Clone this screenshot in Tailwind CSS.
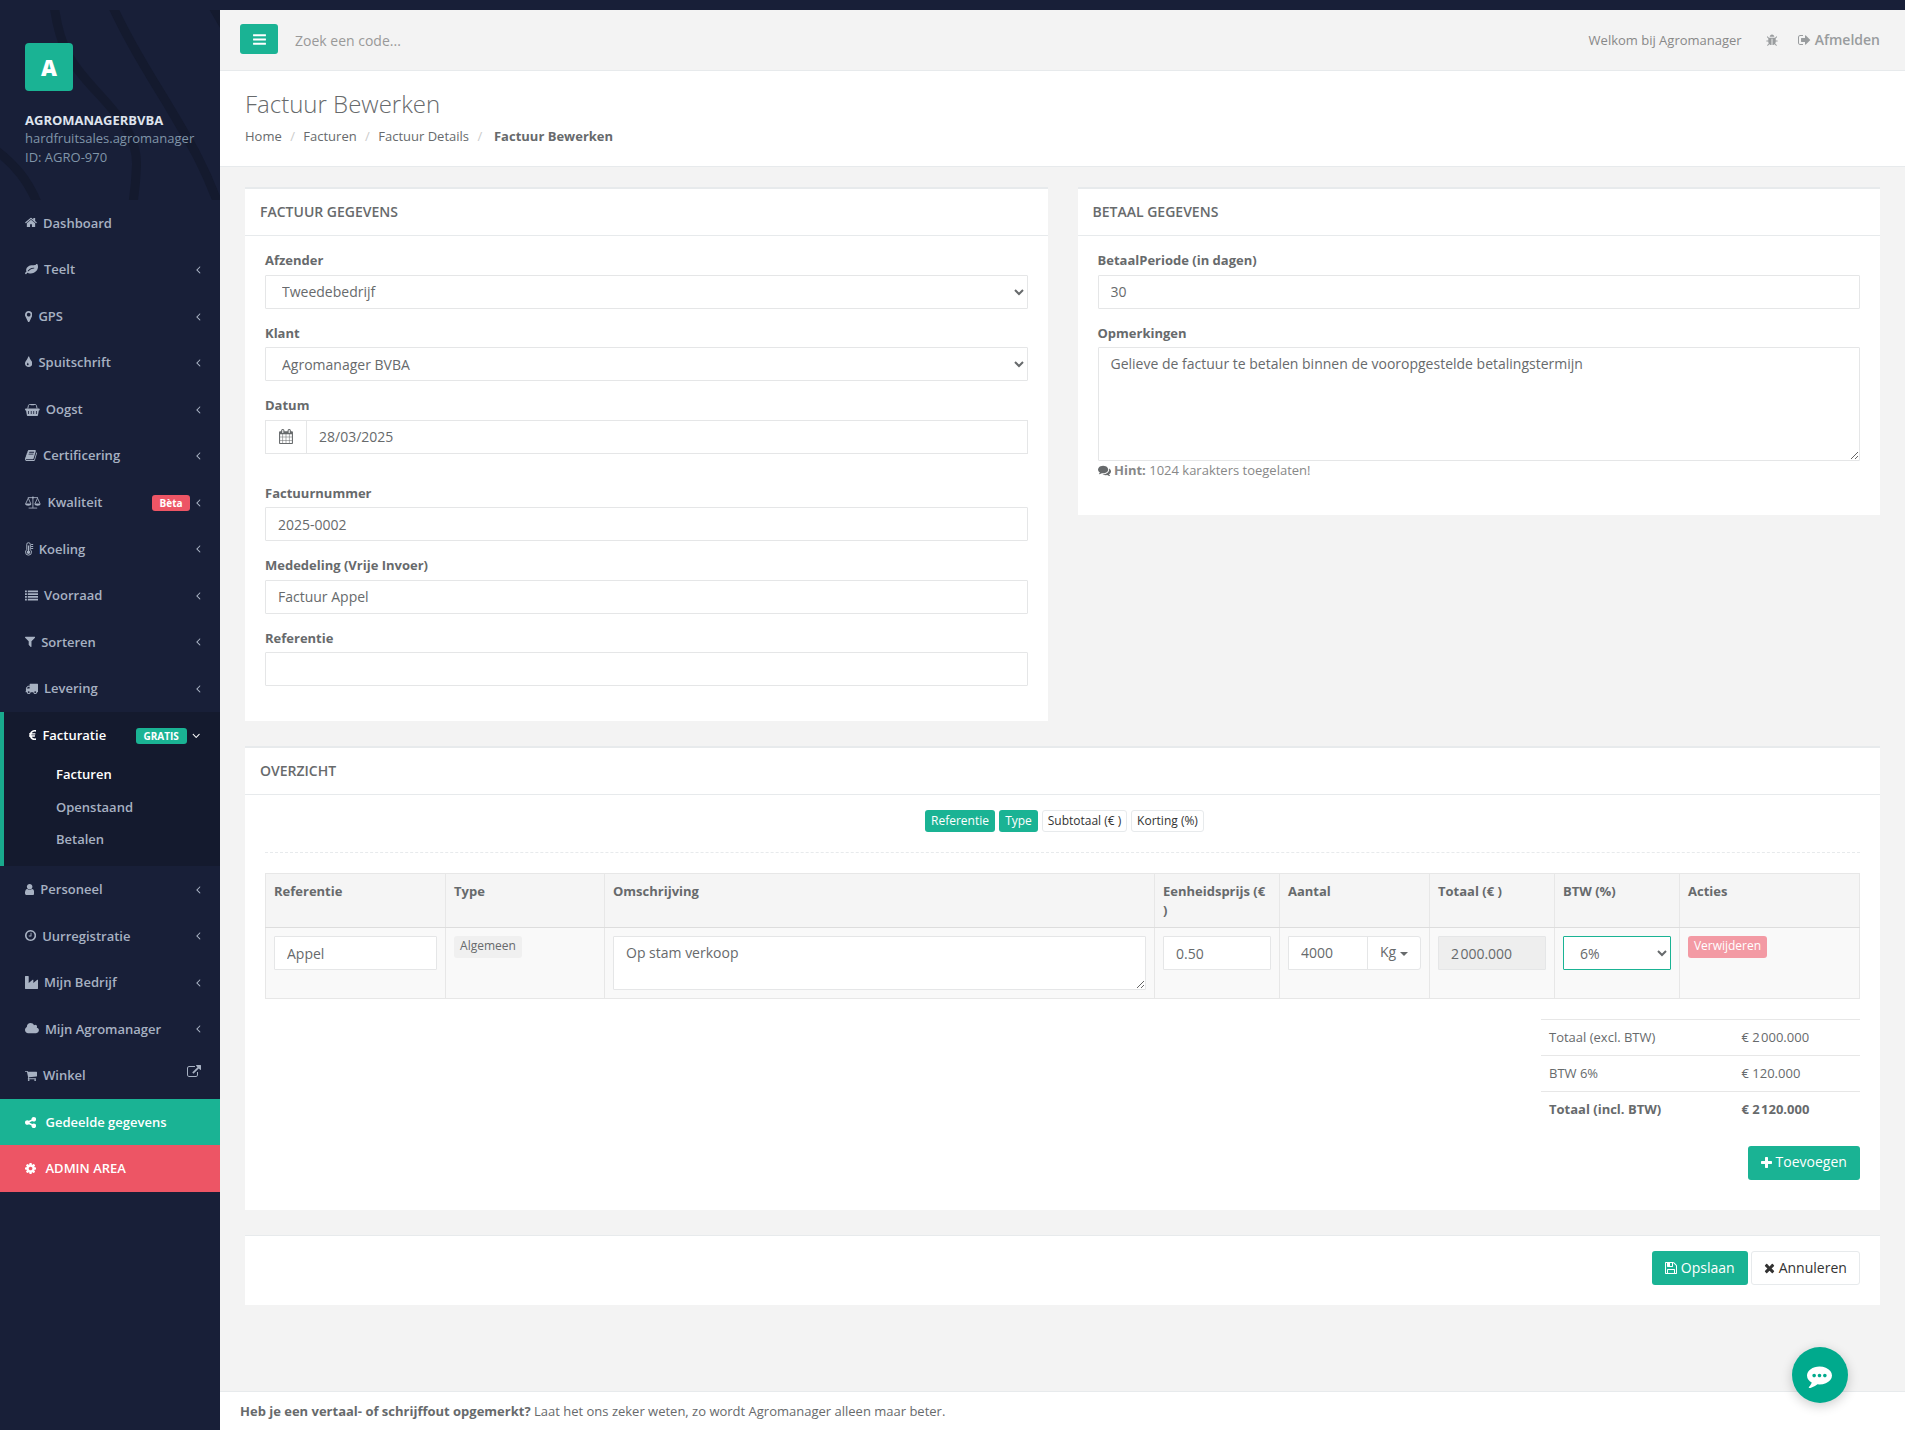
<!doctype html>
<html lang="nl">
<head>
    <meta charset="utf-8"/>
    <title>Factuur Bewerken</title>
    <script src="https://cdn.jsdelivr.net/npm/@tailwindcss/browser@4"></script>
</head>
<body class="bg-[#181f38] font-['Open_Sans',sans-serif] text-[13px] leading-[18.57px] text-[#676a6c] pt-[10px] h-[1430px] overflow-hidden">
<!-- icon sprite -->
<svg class="hidden">
    <symbol id="bars" viewBox="128 0 1536 1792"><path d="M1664 1344v128q0 26-19 45t-45 19h-1408q-26 0-45-19t-19-45v-128q0-26 19-45t45-19h1408q26 0 45 19t19 45zm0-512v128q0 26-19 45t-45 19h-1408q-26 0-45-19t-19-45v-128q0-26 19-45t45-19h1408q26 0 45 19t19 45zm0-512v128q0 26-19 45t-45 19h-1408q-26 0-45-19t-19-45v-128q0-26 19-45t45-19h1408q26 0 45 19t19 45z"/></symbol>
    <symbol id="home" viewBox="64 0 1664 1792"><path d="M1472 992v480q0 26-19 45t-45 19h-384v-384h-256v384h-384q-26 0-45-19t-19-45v-480q0-1 .5-3t.5-3l575-474 575 474q1 2 1 6zm223-69l-62 74q-8 9-21 11h-3q-13 0-21-7l-692-577-692 577q-12 8-24 7-13-2-21-11l-62-74q-8-10-7-23.5t11-21.5l719-599q32-26 76-26t76 26l244 204v-195q0-14 9-23t23-9h192q14 0 23 9t9 23v408l219 182q10 8 11 21.5t-7 23.5z"/></symbol>
    <symbol id="leaf" viewBox="0 0 1792 1792"><path d="M1280 704q0-26-19-45t-45-19q-172 0-318 49.5t-259.5 134-235.5 219.5q-19 21-19 45 0 26 19 45t45 19q24 0 45-19 27-24 74-71t67-66q137-124 268.5-176t313.5-52q26 0 45-19t19-45zm512-198q0 95-20 193-46 224-184.5 383t-357.5 268q-214 108-438 108-148 0-286-47-15-5-88-42t-96-37q-16 0-39.5 32t-45 70-52.5 70-60 32q-43 0-63.5-17.5t-45.5-59.5q-2-4-6-11t-5.5-10-3-9.5-1.5-13.5q0-35 31-73.5t68-65.5 68-56 31-48q0-4-14-38t-16-44q-9-51-9-104 0-115 43.5-220t119-184.5 170.5-139 204-95.5q55-18 145-25.5t179.5-9 178.5-6 163.5-24 113.5-56.5l29.5-29.5 29.5-28 27-20 36.5-16 43.5-4.5q39 0 70.5 46t47.5 112 24 124 8 96z"/></symbol>
    <symbol id="marker" viewBox="384 0 1024 1792"><path d="M1152 640q0-106-75-181t-181-75-181 75-75 181 75 181 181 75 181-75 75-181zm256 0q0 109-33 179l-364 774q-16 33-47.5 52t-67.5 19-67.5-19-46.5-52l-365-774q-33-70-33-179 0-212 150-362t362-150 362 150 150 362z"/></symbol>
    <symbol id="tint" viewBox="384 0 1024 1792"><path d="M896 1152q0-36-20-69-1-1-15.5-22.5t-25.5-38-25-44-21-50.5q-4-16-21-16t-21 16q-7 23-21 50.5t-25 44-25.5 38-15.5 22.5q-20 33-20 69 0 53 37.5 90.5t90.5 37.5 90.5-37.5 37.5-90.5zm512-128q0 212-150 362t-362 150-362-150-150-362q0-145 81-275 6-9 62.5-90.5t101-151 99.5-178 83-201.5q9-30 34-47t51-17 51.5 17 33.5 47q28 93 83 201.5t99.5 178 101 151 62.5 90.5q81 127 81 275z"/></symbol>
    <symbol id="basket" viewBox="0 0 2048 1792"><path fill-rule="evenodd" d="M128 768h1792q53 0 90 37t38 91-38 90-90 38h-15l-115 662q-8 46-44 76t-82 30h-1280q-46 0-82-30t-44-76l-115-662h-15q-53 0-90-38t-38-90 38-91 90-37zM440 1100v420h110v-420zm360 0v420h110v-420zm350 0v420h110v-420zm360 0v420h110v-420z"/><path fill="none" stroke="currentColor" stroke-width="130" d="M380 768l100-440q25-120 150-120h180M1668 768l-100-440q-25-120-150-120h-180"/><rect x="760" y="128" width="528" height="190" rx="60"/></symbol>
    <symbol id="book" viewBox="64 0 1664 1792"><path d="M1703 478q40 57 18 129l-275 906q-19 64-76.5 107.5t-122.5 43.5h-923q-77 0-148.5-53.5t-99.5-131.5q-24-67-2-127 0-4 3-27t4-37q1-8-3-21.5t-3-19.5q2-11 8-21t16.5-23.5 16.5-23.5q23-38 45-91.5t30-91.5q3-10 .5-30t-.5-28q3-11 17-28t17-23q21-36 42-92t25-90q1-9-2.5-32t.5-28q4-13 22-30.5t22-22.5q19-26 42.5-84.5t27.5-96.5q1-8-3-25.5t-2-26.5q2-8 9-18t18-23 17-21q8-12 16.5-30.5t15-35 16-36 19.5-32 26.5-23.5 36-11.5 47.5 5.5l-1 3q38-9 51-9h761q74 0 114 56t18 130l-274 906q-36 119-71.5 153.5t-128.5 34.5h-869q-27 0-38 15-11 16-1 43 24 70 144 70h923q29 0 56-15.5t35-41.5l300-987q7-22 5-57 38 15 59 43zm-1064 2q-4 13 2 22.5t20 9.5h608q13 0 25.5-9.5t16.5-22.5l21-64q4-13-2-22.5t-20-9.5h-608q-13 0-25.5 9.5t-16.5 22.5zm-83 256q-4 13 2 22.5t20 9.5h608q13 0 25.5-9.5t16.5-22.5l21-64q4-13-2-22.5t-20-9.5h-608q-13 0-25.5 9.5t-16.5 22.5z"/></symbol>
    <symbol id="scale" viewBox="0 0 2176 1792"><path fill="none" stroke="currentColor" stroke-width="120" d="M384 220h1408M1088 200v1450M500 1664h1176M448 300l-370 800h740zM1728 300l-370 800h740z"/><path d="M20 1100h856q-20 230-428 230t-428-230zm1280 0h856q-20 230-428 230t-428-230z"/><circle cx="1088" cy="210" r="130"/></symbol>
    <symbol id="thermo" viewBox="0 0 1088 1792"><path fill="none" stroke="currentColor" stroke-width="125" d="M224 1000V290q0-200 225-200t225 200v710q160 110 160 310 0 370-385 370t-385-370q0-200 160-310z"/><circle cx="449" cy="1310" r="210"/><path d="M370 440h158v800h-158zM780 256h284v128h-284zm0 256h284v128h-284zm0 256h284v128h-284z"/></symbol>
    <symbol id="list" viewBox="0 0 1792 1792"><path d="M0 256h256v256h-256zm0 384h256v256h-256zm0 384h256v256h-256zm0 384h256v256h-256zM384 256h1408v256h-1408zm0 384h1408v256h-1408zm0 384h1408v256h-1408zm0 384h1408v256h-1408z" transform="translate(0 -64)"/></symbol>
    <symbol id="filter" viewBox="192 0 1408 1792"><path d="M1595 295q17 41-14 70l-493 493v742q0 42-39 59-13 5-25 5-27 0-45-19l-256-256q-19-19-19-45v-486l-493-493q-31-29-14-70 17-39 59-39h1280q42 0 59 39z"/></symbol>
    <symbol id="truck" viewBox="0 0 1792 1792"><path d="M640 1408q0-52-38-90t-90-38-90 38-38 90 38 90 90 38 90-38 38-90zm-384-512h384v-256h-158q-13 0-22 9l-195 195q-9 9-9 22v30zm1280 512q0-52-38-90t-90-38-90 38-38 90 38 90 90 38 90-38 38-90zm256-1088v1024q0 15-4 26.5t-13.5 18.5-16.5 11.5-23.5 6-22.5 2-25.5 0-22.5-.5q0 106-75 181t-181 75-181-75-75-181h-384q0 106-75 181t-181 75-181-75-75-181h-64q-3 0-22.5.5t-25.5 0-22.5-2-23.5-6-16.5-11.5-13.5-18.5-4-26.5q0-26 19-45t45-19v-320q0-8-.5-35t0-38 2.5-34.5 6.5-37 14-30.5 22.5-30l198-198q19-19 50.5-32t58.5-13h160v-192q0-26 19-45t45-19h1024q26 0 45 19t19 45z"/></symbol>
    <symbol id="eur" viewBox="384 0 1024 1792"><path d="M1360 1307l35 159q3 12-3 22.5t-17 14.5l-5 1q-4 2-10.5 3.5t-16 4.5-21.5 5.5-25.5 5-30 5-33.5 4.5-36.5 3-38.5 1q-234 0-409-130.5t-238-351.5h-95q-13 0-22.5-9.5t-9.5-22.5v-113q0-13 9.5-22.5t22.5-9.5h66q-2-57 1-105h-67q-14 0-23-9t-9-23v-114q0-14 9-23t23-9h98q67-210 243.5-338t400.5-128q102 0 194 23 11 3 20 15 6 11 3 24l-43 159q-3 13-14 19.5t-24 2.5l-4-1q-4-1-11.5-2.5l-17.5-3.5-22.5-3.5-26-3-29-2.5-29.5-1q-126 0-226 64t-150 176h468q16 0 25 12 10 12 7 26l-24 114q-5 26-32 26h-488q-3 37 0 105h459q15 0 25 12 9 12 6 27l-24 112q-2 11-11 18.5t-20 7.5h-387q48 117 149.5 185.5t228.5 68.5q18 0 36-1.5t33.5-3.5 29.5-4.5 24.5-5 18.5-4.5l12-3 5-2q13-5 26 2 12 7 15 21z"/></symbol>
    <symbol id="user" viewBox="256 0 1280 1792"><path d="M1536 1399q0 109-62.5 187t-150.5 78h-854q-88 0-150.5-78t-62.5-187q0-85 8.5-160.5t31.5-152 58.5-131 94-89 134.5-34.5q131 128 313 128t313-128q76 0 134.5 34.5t94 89 58.5 131 31.5 152 8.5 160.5zm-256-887q0 159-112.5 271.5t-271.5 112.5-271.5-112.5-112.5-271.5 112.5-271.5 271.5-112.5 271.5 112.5 112.5 271.5z"/></symbol>
    <symbol id="clock" viewBox="128 0 1536 1792"><path d="M1024 544v448q0 14-9 23t-23 9h-320q-14 0-23-9t-9-23v-64q0-14 9-23t23-9h224v-352q0-14 9-23t23-9h64q14 0 23 9t9 23zm416 352q0-148-73-273t-198-198-273-73-273 73-198 198-73 273 73 273 198 198 273 73 273-73 198-198 73-273zm224 0q0 209-103 385.5t-279.5 279.5-385.5 103-385.5-103-279.5-279.5-103-385.5 103-385.5 279.5-279.5 385.5-103 385.5 103 279.5 279.5 103 385.5z"/></symbol>
    <symbol id="industry" viewBox="0 0 1792 1792"><path d="M448 0q26 0 45 19t19 45v891l536-429q17-14 40-14 26 0 45 19t19 45v379l536-429q17-14 40-14 26 0 45 19t19 45v1152q0 26-19 45t-45 19h-1664q-26 0-45-19t-19-45v-1664q0-26 19-45t45-19h384z"/></symbol>
    <symbol id="cloud" viewBox="-64 0 1920 1792"><path d="M1856 1152q0 159-112.5 271.5t-271.5 112.5h-1088q-185 0-316.5-131.5t-131.5-316.5q0-132 71-241.5t187-163.5q-2-28-2-43 0-212 150-362t362-150q158 0 286.5 88t187.5 230q70-62 166-62 106 0 181 75t75 181q0 75-41 138 129 30 213 134.5t84 239.5z"/></symbol>
    <symbol id="cart" viewBox="64 0 1664 1792"><path d="M704 1536q0 52-38 90t-90 38-90-38-38-90 38-90 90-38 90 38 38 90zm896 0q0 52-38 90t-90 38-90-38-38-90 38-90 90-38 90 38 38 90zm128-1088v512q0 24-16.5 42.5t-40.5 21.5l-1044 122q13 60 13 70 0 16-24 64h920q26 0 45 19t19 45-19 45-45 19h-1024q-26 0-45-19t-19-45q0-11 8-31.5t16-36 21.5-40 15.5-29.5l-177-823h-204q-26 0-45-19t-19-45 19-45 45-19h256q16 0 28.5 6.5t19.5 15.5 13 24.5 8 26 5.5 29.5 4.5 26h1201q26 0 45 19t19 45z"/></symbol>
    <symbol id="share" viewBox="128 0 1536 1792"><path d="M1344 1024q133 0 226.5 93.5t93.5 226.5-93.5 226.5-226.5 93.5-226.5-93.5-93.5-226.5q0-12 2-34l-360-180q-92 86-218 86-133 0-226.5-93.5t-93.5-226.5 93.5-226.5 226.5-93.5q126 0 218 86l360-180q-2-22-2-34 0-133 93.5-226.5t226.5-93.5 226.5 93.5 93.5 226.5-93.5 226.5-226.5 93.5q-126 0-218-86l-360 180q2 22 2 34t-2 34l360 180q92-86 218-86z"/></symbol>
    <symbol id="cog" viewBox="128 0 1536 1792"><path d="M1152 896q0-106-75-181t-181-75-181 75-75 181 75 181 181 75 181-75 75-181zm512-109v222q0 12-8 23t-20 13l-185 28q-19 54-39 91 35 50 107 138 10 12 10 25t-9 23q-27 37-99 108t-94 71q-12 0-26-9l-138-108q-44 23-91 38-16 136-29 186-7 28-36 28h-222q-14 0-24.5-8.5t-11.5-21.5l-28-184q-49-16-90-37l-141 107q-10 9-25 9-14 0-25-11-126-114-165-168-7-10-7-23 0-12 8-23 15-21 51-66.5t54-70.5q-27-50-41-99l-183-27q-13-2-21-12.5t-8-23.5v-222q0-12 8-23t19-13l186-28q14-46 39-92-40-57-107-138-10-12-10-24 0-10 9-23 26-36 98.5-107.5t94.5-71.5q13 0 26 10l138 107q44-23 91-38 16-136 29-186 7-28 36-28h222q14 0 24.5 8.5t11.5 21.5l28 184q49 16 90 37l142-107q9-9 24-9 13 0 25 10 129 119 165 170 7 8 7 22 0 12-8 23-15 21-51 66.5t-54 70.5q26 50 41 98l183 28q13 2 21 12.5t8 23.5z"/></symbol>
    <symbol id="external" viewBox="0 0 1792 1792"><path d="M1408 928v320q0 119-84.5 203.5t-203.5 84.5h-832q-119 0-203.5-84.5t-84.5-203.5v-832q0-119 84.5-203.5t203.5-84.5h704q14 0 23 9t9 23v64q0 14-9 23t-23 9h-704q-66 0-113 47t-47 113v832q0 66 47 113t113 47h832q66 0 113-47t47-113v-320q0-14 9-23t23-9h64q14 0 23 9t9 23zm384-864v512q0 26-19 45t-45 19-45-19l-176-176-652 652q-10 10-23 10t-23-10l-114-114q-10-10-10-23t10-23l652-652-176-176q-19-19-19-45t19-45 45-19h512q26 0 45 19t19 45z"/></symbol>
    <symbol id="left" viewBox="576 0 640 1792"><path d="M1203 544q0 13-10 23l-393 393 393 393q10 10 10 23t-10 23l-50 50q-10 10-23 10t-23-10l-466-466q-10-10-10-23t10-23l466-466q10-10 23-10t23 10l50 50q10 10 10 23z"/></symbol>
    <symbol id="down" viewBox="320 0 1152 1792"><path d="M1395 736q0 13-10 23l-466 466q-10 10-23 10t-23-10l-466-466q-10-10-10-23t10-23l50-50q10-10 23-10t23 10l393 393 393-393q10-10 23-10t23 10l50 50q10 10 10 23z"/></symbol>
    <symbol id="bug" viewBox="64 0 1664 1792"><path d="M1696 960q0 26-19 45t-45 19h-224q0 171-67 290l208 209q19 19 19 45t-19 45q-18 19-45 19t-45-19l-198-197q-5 5-15 13t-42 28.5-65 36.5-82 29-97 13v-896h-128v896q-51 0-101.5-13.5t-87-33-66-39-43.5-32.5l-15-14-183 207q-20 21-48 21-24 0-43-16-19-18-20.5-44.5t15.5-46.5l202-227q-58-114-58-274h-224q-26 0-45-19t-19-45 19-45 45-19h224v-294l-173-173q-19-19-19-45t19-45 45-19 45 19l173 173h844l173-173q19-19 45-19t45 19 19 45-19 45l-173 173v294h224q26 0 45 19t19 45zm-480-576h-640q0-133 93.5-226.5t226.5-93.5 226.5 93.5 93.5 226.5z"/></symbol>
    <symbol id="signout" viewBox="64 0 1664 1792"><path d="M704 1440q0 4 1 20t.5 26.5-3 23.5-10 19.5-20.5 6.5h-320q-119 0-203.5-84.5t-84.5-203.5v-704q0-119 84.5-203.5t203.5-84.5h320q13 0 22.5 9.5t9.5 22.5q0 4 1 20t.5 26.5-3 23.5-10 19.5-20.5 6.5h-320q-66 0-113 47t-47 113v704q0 66 47 113t113 47h312l11.5 1 11.5 3 8 5.5 7 9 2 13.5zm928-544q0 26-19 45l-544 544q-19 19-45 19t-45-19-19-45v-288h-448q-26 0-45-19t-19-45v-384q0-26 19-45t45-19h448v-288q0-26 19-45t45-19 45 19l544 544q19 19 19 45z"/></symbol>
    <symbol id="calendar" viewBox="64 0 1664 1792"><path d="M192 1664h288v-288h-288v288zm352 0h320v-288h-320v288zm-352-352h288v-320h-288v320zm352 0h320v-320h-320v320zm-352-384h288v-288h-288v288zm736 736h320v-288h-320v288zm-384-736h320v-288h-320v288zm768 736h288v-288h-288v288zm-384-352h320v-320h-320v320zm-352-864v-288q0-13-9.5-22.5t-22.5-9.5h-64q-13 0-22.5 9.5t-9.5 22.5v288q0 13 9.5 22.5t22.5 9.5h64q13 0 22.5-9.5t9.5-22.5zm736 864h288v-320h-288v320zm-384-384h320v-288h-320v288zm384 0h288v-288h-288v288zm32-480v-288q0-13-9.5-22.5t-22.5-9.5h-64q-13 0-22.5 9.5t-9.5 22.5v288q0 13 9.5 22.5t22.5 9.5h64q13 0 22.5-9.5t9.5-22.5zm384-64v1280q0 52-38 90t-90 38h-1408q-52 0-90-38t-38-90v-1280q0-52 38-90t90-38h128v-96q0-66 47-113t113-47h64q66 0 113 47t47 113v96h384v-96q0-66 47-113t113-47h64q66 0 113 47t47 113v96h128q52 0 90 38t38 90z"/></symbol>
    <symbol id="comments" viewBox="0 0 1792 1792"><path d="M1408 768q0 139-94 257t-256.5 186.5-353.5 68.5q-86 0-176-16-124 88-278 128-36 9-86 16h-3q-11 0-20.5-8t-11.5-21q-1-3-1-6.5t.5-6.5 2-6l2.5-5 3.5-5.5 4-5 4.5-5 4-4.5q5-6 23-25t26-29.5 22.5-29 25-38.5 20.5-44q-124-72-195-177t-71-224q0-139 94-257t256.5-186.5 353.5-68.5 353.5 68.5 256.5 186.5 94 257zm384 256q0 120-71 224.5t-195 176.5q10 24 20.5 44t25 38.5 22.5 29 26 29.5 23 25q1 1 4 4.5t4.5 5 4 5 3.5 5.5l2.5 5 2 6 .5 6.5-1 6.5q-3 14-13 22t-22 7q-50-7-86-16-154-40-278-128-90 16-176 16-271 0-472-132 58 4 88 4 161 0 309-45t264-129q125-92 192-212t67-254q0-77-23-152 129 71 204 178t75 230z"/></symbol>
    <symbol id="plus" viewBox="192 0 1408 1792"><path d="M1600 736v192q0 40-28 68t-68 28h-416v416q0 40-28 68t-68 28h-192q-40 0-68-28t-28-68v-416h-416q-40 0-68-28t-28-68v-192q0-40 28-68t68-28h416v-416q0-40 28-68t68-28h192q40 0 68 28t28 68v416h416q40 0 68 28t28 68z"/></symbol>
    <symbol id="floppy" viewBox="128 0 1536 1792"><path d="M512 1536h768v-384h-768v384zm896 0h128v-896q0-14-10-38.5t-20-34.5l-281-281q-10-10-34-20t-39-10v416q0 40-28 68t-68 28h-576q-40 0-68-28t-28-68v-416h-128v1280h128v-416q0-40 28-68t68-28h832q40 0 68 28t28 68v416zm-384-928v-320q0-13-9.5-22.5t-22.5-9.5h-192q-13 0-22.5 9.5t-9.5 22.5v320q0 13 9.5 22.5t22.5 9.5h192q13 0 22.5-9.5t9.5-22.5zm640 32v928q0 40-28 68t-68 28h-1344q-40 0-68-28t-28-68v-1344q0-40 28-68t68-28h928q40 0 88 20t76 48l280 280q28 28 48 76t20 88z"/></symbol>
    <symbol id="times" viewBox="192 0 1408 1792"><path d="M1490 1322q0 40-28 68l-136 136q-28 28-68 28t-68-28l-294-294-294 294q-28 28-68 28t-68-28l-136-136q-28-28-28-68t28-68l294-294-294-294q-28-28-28-68t28-68l136-136q28-28 68-28t68 28l294 294 294-294q28-28 68-28t68 28l136 136q28 28 28 68t-28 68l-294 294 294 294q28 28 28 68z"/></symbol>
    <symbol id="chat" viewBox="0 0 1792 1792"><path fill-rule="evenodd" d="M640 896q0-53-37.5-90.5t-90.5-37.5-90.5 37.5-37.5 90.5 37.5 90.5 90.5 37.5 90.5-37.5 37.5-90.5zm384 0q0-53-37.5-90.5t-90.5-37.5-90.5 37.5-37.5 90.5 37.5 90.5 90.5 37.5 90.5-37.5 37.5-90.5zm384 0q0-53-37.5-90.5t-90.5-37.5-90.5 37.5-37.5 90.5 37.5 90.5 90.5 37.5 90.5-37.5 37.5-90.5zm384 0q0 174-120 321.5t-326 233-450 85.5q-70 0-145-8-198 175-460 242-49 14-114 22-17 2-30.5-9t-17.5-29v-1q-3-4-.5-12t2-10 4.5-9.5l6-9 7-8.5 8-9q7-8 31-34.5t34.5-38 31-39.5 32.5-51 27-59 26-76q-157-89-247.5-220t-90.5-281q0-130 71-248.5t191-204.5 286-136.5 348-50.5q244 0 450 85.5t326 233 120 321.5z"/></symbol>
</svg>

<div class="flex h-[1420px]">
    <nav class="w-[220px] shrink-0 bg-[#181f38] text-[#a7b1c2] fill-current font-semibold">
        <div class="relative h-[189.600px] pl-[25px] pt-[33px] font-normal">
            <svg class="absolute inset-0 w-[220px] h-[190px]" viewBox="0 10 220 190" fill="none" stroke="#141a2e" stroke-width="9">
                <path d="M54 5C60 50 72 65 97 92C125 122 137 140 136.500 165C136 180 135 190 133 203"/>
                <path d="M112 5C130 45 150 75 168 105C190 142 204 165 219 206"/>
                <path d="M212 5L224 26"/>
                <path d="M-3 151C15 165 28 180 38 205"/>
            </svg>
            <div class="relative flex w-12 h-12 items-center justify-center rounded bg-[#1ab394] text-[22px] font-extrabold text-white">A</div>
            <div class="relative pt-[19.900px]">
                <p class="font-bold text-[#dfe4ed]">AGROMANAGERBVBA</p>
                <p class="text-[#8095a8]">hardfruitsales.agromanager</p>
                <p class="text-[#8095a8]">ID: AGRO-970</p>
            </div>
        </div>
        <ul>
            <li class="flex h-[46.570px] items-center pl-[25px] pr-[19.300px]">
                <svg class="h-[13px] w-[12px] mr-1.5"><use href="#home"/></svg>Dashboard
            </li>
            <li class="flex h-[46.570px] items-center pl-[25px] pr-[19.300px]">
                <svg class="h-[13px] w-[13px] mr-1.5"><use href="#leaf"/></svg>Teelt
                <svg class="h-[13px] w-[4.640px] ml-auto"><use href="#left"/></svg>
            </li>
            <li class="flex h-[46.570px] items-center pl-[25px] pr-[19.300px]">
                <svg class="h-[13px] w-[7.400px] mr-1.5"><use href="#marker"/></svg>GPS
                <svg class="h-[13px] w-[4.640px] ml-auto"><use href="#left"/></svg>
            </li>
            <li class="flex h-[46.570px] items-center pl-[25px] pr-[19.300px]">
                <svg class="h-[13px] w-[7.400px] mr-1.5"><use href="#tint"/></svg>Spuitschrift
                <svg class="h-[13px] w-[4.640px] ml-auto"><use href="#left"/></svg>
            </li>
            <li class="flex h-[46.570px] items-center pl-[25px] pr-[19.300px]">
                <svg class="h-[13px] w-[14.860px] mr-1.5"><use href="#basket"/></svg>Oogst
                <svg class="h-[13px] w-[4.640px] ml-auto"><use href="#left"/></svg>
            </li>
            <li class="flex h-[46.570px] items-center pl-[25px] pr-[19.300px]">
                <svg class="h-[13px] w-[12px] mr-1.5"><use href="#book"/></svg>Certificering
                <svg class="h-[13px] w-[4.640px] ml-auto"><use href="#left"/></svg>
            </li>
            <li class="flex h-[46.570px] items-center pl-[25px] pr-[19.300px]">
                <svg class="h-[13px] w-[15.800px] mr-[6.600px]"><use href="#scale"/></svg>Kwaliteit
                <span class="ml-auto mr-[6px] mt-px flex h-4 w-[38px] items-center justify-center rounded-[3px] bg-[#ed5565] text-[10px] font-bold leading-none text-white">Bèta</span>
                <svg class="h-[13px] w-[4.640px]"><use href="#left"/></svg>
            </li>
            <li class="flex h-[46.570px] items-center pl-[25px] pr-[19.300px]">
                <svg class="h-[14px] w-[8.500px] mr-[5.300px]"><use href="#thermo"/></svg>Koeling
                <svg class="h-[13px] w-[4.640px] ml-auto"><use href="#left"/></svg>
            </li>
            <li class="flex h-[46.570px] items-center pl-[25px] pr-[19.300px]">
                <svg class="h-[13px] w-[13px] mr-1.5"><use href="#list"/></svg>Voorraad
                <svg class="h-[13px] w-[4.640px] ml-auto"><use href="#left"/></svg>
            </li>
            <li class="flex h-[46.570px] items-center pl-[25px] pr-[19.300px]">
                <svg class="h-[13px] w-[10.200px] mr-1.5"><use href="#filter"/></svg>Sorteren
                <svg class="h-[13px] w-[4.640px] ml-auto"><use href="#left"/></svg>
            </li>
            <li class="flex h-[46.570px] items-center pl-[25px] pr-[19.300px]">
                <svg class="h-[13px] w-[13px] mr-1.5"><use href="#truck"/></svg>Levering
                <svg class="h-[13px] w-[4.640px] ml-auto"><use href="#left"/></svg>
            </li>
            <li class="h-[154.200px] border-l-4 border-[#19aa8d] bg-[#141a2e]">
                <div class="flex h-[46.570px] items-center pl-[25px] pr-5 text-white">
                    <svg class="h-[13px] w-[7.400px] mr-1.5"><use href="#eur"/></svg>Facturatie
                    <span class="ml-auto mr-[5px] mt-0.5 flex h-4 w-[51px] items-center justify-center rounded-[3px] bg-[#1ab394] text-[10px] font-bold leading-none text-white">GRATIS</span>
                    <svg class="h-[13px] w-[8.360px]"><use href="#down"/></svg>
                </div>
                <ul class="pl-[52px]">
                    <li class="py-[7px] text-white">Facturen</li>
                    <li class="py-[7px]">Openstaand</li>
                    <li class="py-[7px]">Betalen</li>
                </ul>
            </li>
            <li class="flex h-[46.570px] items-center pl-[25px] pr-[19.300px]">
                <svg class="h-[13px] w-[9.300px] mr-1.5"><use href="#user"/></svg>Personeel
                <svg class="h-[13px] w-[4.640px] ml-auto"><use href="#left"/></svg>
            </li>
            <li class="flex h-[46.570px] items-center pl-[25px] pr-[19.300px]">
                <svg class="h-[13px] w-[11.140px] mr-1.5"><use href="#clock"/></svg>Uurregistratie
                <svg class="h-[13px] w-[4.640px] ml-auto"><use href="#left"/></svg>
            </li>
            <li class="flex h-[46.570px] items-center pl-[25px] pr-[19.300px]">
                <svg class="h-[13px] w-[13px] mr-1.5"><use href="#industry"/></svg>Mijn Bedrijf
                <svg class="h-[13px] w-[4.640px] ml-auto"><use href="#left"/></svg>
            </li>
            <li class="flex h-[46.570px] items-center pl-[25px] pr-[19.300px]">
                <svg class="h-[13px] w-[13.900px] mr-1.5"><use href="#cloud"/></svg>Mijn Agromanager
                <svg class="h-[13px] w-[4.640px] ml-auto"><use href="#left"/></svg>
            </li>
            <li class="flex h-[46.570px] items-center pl-[25px] pr-[19.300px]">
                <svg class="h-[13px] w-[12px] mr-1.5"><use href="#cart"/></svg>Winkel
                <svg class="h-[14px] w-[14px] ml-auto mb-2"><use href="#external"/></svg>
            </li>
            <li class="flex h-[46.570px] items-center bg-[#1ab394] pl-[25px] pr-5 text-white">
                <svg class="h-[13px] w-[11.140px] mr-[9.400px]"><use href="#share"/></svg>Gedeelde gegevens
            </li>
            <li class="flex h-[46.570px] items-center bg-[#ed5565] pl-[25px] pr-5 text-white">
                <svg class="h-[13px] w-[11.140px] mr-[9.400px]"><use href="#cog"/></svg>ADMIN AREA
            </li>
        </ul>
    </nav>

    <main class="flex flex-1 flex-col bg-[#f3f3f3]">
        <header class="flex h-[61px] items-center border-b border-[#e7eaec] pl-5 pr-[25px] text-[#999c9e] fill-current">
            <button class="-mt-0.5 flex h-[30px] w-[38px] items-center justify-center rounded-[3px] bg-[#1ab394] text-white fill-current">
                <svg class="h-[15px] w-[13px]"><use href="#bars"/></svg>
            </button>
            <span class="ml-[17px] mt-0.5 text-[14px] text-[#999]">Zoek een code...</span>
            <span class="ml-auto text-[#888]">Welkom bij Agromanager</span>
            <svg class="ml-[24px] h-[13px] w-[12px]"><use href="#bug"/></svg>
            <svg class="ml-[20px] mr-1 h-[14px] w-[13px]"><use href="#signout"/></svg>
            <span class="text-[14px] font-semibold">Afmelden</span>
        </header>

        <div class="h-[96px] border-b border-[#e7eaec] bg-white pl-[25px] pt-[20px]">
            <h2 class="text-[24px] font-light leading-[26px]">Factuur Bewerken</h2>
            <ol class="flex pt-[10px]">
                <li>Home</li>
                <li class="before:px-[8.400px] before:text-[#ccc] before:content-['/']">Facturen</li>
                <li class="before:px-[8.400px] before:text-[#ccc] before:content-['/']">Factuur Details</li>
                <li class="font-bold before:pl-[8.400px] before:pr-[11.800px] before:font-normal before:text-[#ccc] before:content-['/']">Factuur Bewerken</li>
            </ol>
        </div>

        <div class="px-[25px] pt-5">
            <div class="flex items-start gap-[30px]">
                <section class="h-[534.400px] flex-1 border-t-2 border-[#e7eaec] bg-white">
                    <h5 class="flex h-[47px] items-center border-b border-[#e7eaec] px-[15px] text-[14px] font-semibold">FACTUUR GEGEVENS</h5>
                    <form class="px-5 pt-[15px]">
                        <label class="block pb-[5px] font-bold">Afzender</label>
                        <select class="mb-[15px] block h-[34px] w-full rounded-[1px] border border-[#e5e6e7] bg-white px-3 text-[14px]"><option>Tweedebedrijf</option></select>
                        <label class="block pb-[5px] font-bold">Klant</label>
                        <select class="mb-[15px] block h-[34px] w-full rounded-[1px] border border-[#e5e6e7] bg-white px-3 text-[14px]"><option>Agromanager BVBA</option></select>
                        <label class="block pb-[5px] font-bold">Datum</label>
                        <div class="mb-[30px] flex h-[34px] border border-[#e5e6e7]">
                            <span class="flex w-[41px] items-center justify-center border-r border-[#e5e6e7] fill-current"><svg class="h-[15px] w-[14px]"><use href="#calendar"/></svg></span>
                            <input class="flex-1 px-3 pt-px text-[14px]" value="28/03/2025">
                        </div>
                        <label class="block pb-[5px] font-bold">Factuurnummer</label>
                        <input class="mb-[15px] block h-[34px] w-full rounded-[1px] border border-[#e5e6e7] px-3 text-[14px]" value="2025-0002">
                        <label class="block pb-[5px] font-bold">Mededeling (Vrije Invoer)</label>
                        <input class="mb-[15px] block h-[34px] w-full rounded-[1px] border border-[#e5e6e7] px-3 text-[14px]" value="Factuur Appel">
                        <label class="block pb-[5px] font-bold">Referentie</label>
                        <input class="block h-[34px] w-full rounded-[1px] border border-[#e5e6e7] px-3 text-[14px]">
                    </form>
                </section>

                <section class="h-[328px] flex-1 border-t-2 border-[#e7eaec] bg-white">
                    <h5 class="flex h-[47px] items-center border-b border-[#e7eaec] px-[15px] text-[14px] font-semibold">BETAAL GEGEVENS</h5>
                    <form class="px-5 pt-[15px]">
                        <label class="block pb-[5px] font-bold">BetaalPeriode (in dagen)</label>
                        <input class="mb-[15px] block h-[34px] w-full rounded-[1px] border border-[#e5e6e7] px-3 text-[14px]" value="30">
                        <label class="block pb-[5px] font-bold">Opmerkingen</label>
                        <textarea class="block h-[114px] w-full rounded-[1px] border border-[#e5e6e7] px-3 py-1.5 text-[14px] leading-5">Gelieve de factuur te betalen binnen de vooropgestelde betalingstermijn</textarea>
                        <p class="flex items-center text-[#888]">
                            <svg class="mr-[3.500px] h-[13px] w-[13px] fill-[#676a6c]"><use href="#comments"/></svg>
                            <b class="mr-[3.400px]">Hint:</b>1024 karakters toegelaten!
                        </p>
                    </form>
                </section>
            </div>

            <section class="mt-[25px] h-[463.600px] border-t-2 border-[#e7eaec] bg-white">
                <h5 class="flex h-[47px] items-center border-b border-[#e7eaec] px-[15px] text-[14px] font-semibold">OVERZICHT</h5>
                <div class="px-5 pt-[15px]">
                    <div class="flex justify-center gap-1 pl-[4px] text-[12px]">
                        <button class="flex h-[22px] w-[70px] items-center justify-center rounded-[3px] bg-[#1ab394] text-white">Referentie</button>
                        <button class="flex h-[22px] w-[39px] items-center justify-center rounded-[3px] bg-[#1ab394] text-white">Type</button>
                        <button class="flex h-[22px] w-[85px] items-center justify-center rounded-[3px] border border-[#e7eaec] text-[#333]">Subtotaal (€ )</button>
                        <button class="flex h-[22px] w-[73px] items-center justify-center rounded-[3px] border border-[#e7eaec] text-[#333]">Korting (%)</button>
                    </div>
                    <div class="my-5 border-t border-dashed border-[#e7eaec]"></div>

                    <table class="w-full table-fixed border-collapse border border-[#e7e7e7]">
                        <colgroup>
                            <col class="w-[180px]"><col class="w-[159px]"><col><col class="w-[125px]"><col class="w-[150px]"><col class="w-[125px]"><col class="w-[125px]"><col class="w-[180px]">
                        </colgroup>
                        <thead>
                        <tr class="bg-[#f5f5f5] text-left align-top">
                            <th class="border border-[#e7e7e7] border-b-[#ddd] px-2 pt-2 pb-[7px]">Referentie</th>
                            <th class="border border-[#e7e7e7] border-b-[#ddd] px-2 pt-2 pb-[7px]">Type</th>
                            <th class="border border-[#e7e7e7] border-b-[#ddd] px-2 pt-2 pb-[7px]">Omschrijving</th>
                            <th class="border border-[#e7e7e7] border-b-[#ddd] px-2 pt-2 pb-[7px]">Eenheidsprijs (€<br>)</th>
                            <th class="border border-[#e7e7e7] border-b-[#ddd] px-2 pt-2 pb-[7px]">Aantal</th>
                            <th class="border border-[#e7e7e7] border-b-[#ddd] px-2 pt-2 pb-[7px]">Totaal (€ )</th>
                            <th class="border border-[#e7e7e7] border-b-[#ddd] px-2 pt-2 pb-[7px]">BTW (%)</th>
                            <th class="border border-[#e7e7e7] border-b-[#ddd] px-2 pt-2 pb-[7px]">Acties</th>
                        </tr>
                        </thead>
                        <tbody>
                        <tr class="bg-[#f9f9f9] align-top">
                            <td class="border border-[#e7e7e7] p-2"><input class="block h-[34px] w-full rounded-[1px] border border-[#e5e6e7] bg-white px-3 pt-px text-[14px]" value="Appel"></td>
                            <td class="border border-[#e7e7e7] p-2"><span class="flex h-[22px] w-[68px] items-center justify-center rounded-[3px] bg-[#f0f0f0] text-[12px]">Algemeen</span></td>
                            <td class="border border-[#e7e7e7] p-2"><textarea class="block h-[54px] w-full rounded-[1px] border border-[#e5e6e7] bg-white px-3 py-1.5 text-[14px] leading-5">Op stam verkoop</textarea></td>
                            <td class="border border-[#e7e7e7] p-2"><input class="block h-[34px] w-full rounded-[1px] border border-[#e5e6e7] bg-white px-3 pt-px text-[14px]" value="0.50"></td>
                            <td class="border border-[#e7e7e7] p-2">
                                <div class="flex h-[34px] rounded-r-[3px] border border-[#e5e6e7] bg-white text-[14px]">
                                    <input class="w-[79px] border-r border-[#e5e6e7] px-3 pt-0.5" value="4000">
                                    <span class="flex flex-1 items-center justify-center gap-1">Kg <i class="mt-0.5 border-x-4 border-t-4 border-x-transparent border-t-[#676a6c]"></i></span>
                                </div>
                            </td>
                            <td class="border border-[#e7e7e7] p-2"><input class="block h-[34px] w-full rounded-[1px] border border-[#e5e6e7] bg-[#eee] px-3 pt-px text-[14px]" value="2&#8202;000.000" readonly></td>
                            <td class="border border-[#e7e7e7] p-2"><select class="block h-[34px] w-full rounded-[1px] border border-[#1ab394] bg-white px-3 pt-px text-[14px]"><option>6%</option></select></td>
                            <td class="border border-[#e7e7e7] p-2"><button class="flex h-[22px] w-[79px] items-center justify-center rounded-[3px] bg-[#f39aa4] text-[12px] text-white">Verwijderen</button></td>
                        </tr>
                        </tbody>
                    </table>

                    <div class="ml-auto mt-5 w-[319px]">
                        <div class="flex h-9 items-center border-t border-[#e7e7e7] px-2"><span class="w-[192.500px]">Totaal (excl. BTW)</span><span>€ 2&#8202;000.000</span></div>
                        <div class="flex h-9 items-center border-t border-[#e7e7e7] px-2"><span class="w-[192.500px]">BTW 6%</span><span>€ 120.000</span></div>
                        <div class="flex h-9 items-center border-t border-[#e7e7e7] px-2 font-bold"><span class="w-[192.500px]">Totaal (incl. BTW)</span><span>€ 2&#8202;120.000</span></div>
                    </div>
                    <button class="ml-auto mt-[19px] flex h-[34px] w-[112px] items-center justify-center gap-[3.500px] rounded-[3px] bg-[#1ab394] text-[14px] text-white fill-current">
                        <svg class="h-[14px] w-[11px]"><use href="#plus"/></svg>Toevoegen
                    </button>
                </div>
            </section>

            <section class="mt-[25px] flex h-[70px] justify-end gap-[3px] border-t border-[#e7eaec] bg-white px-5 pt-[15px] text-[14px]">
                <button class="flex h-[34px] w-[96px] items-center justify-center gap-[3.500px] rounded-[3px] bg-[#1ab394] text-white fill-current">
                    <svg class="h-[14px] w-[12px]"><use href="#floppy"/></svg>Opslaan
                </button>
                <button class="flex h-[34px] w-[109px] items-center justify-center gap-[3.500px] rounded-[3px] border border-[#e7eaec] text-[#333] fill-current">
                    <svg class="h-[14px] w-[11px]"><use href="#times"/></svg>Annuleren
                </button>
            </section>
        </div>

        <footer class="mt-auto h-[39px] border-t border-[#e7eaec] bg-white px-5 pt-[10px]">
            <b>Heb je een vertaal- of schrijffout opgemerkt?</b> Laat het ons zeker weten, zo wordt Agromanager alleen maar beter.
        </footer>
    </main>
</div>

<button class="fixed left-[1792px] top-[1347px] flex h-14 w-14 items-center justify-center rounded-full bg-[#00aa8d] shadow-[0_3px_12px_rgba(0,0,0,0.2)]">
    <svg class="mr-px h-[25px] w-[25px] fill-white"><use href="#chat"/></svg>
</button>
</body>
</html>
